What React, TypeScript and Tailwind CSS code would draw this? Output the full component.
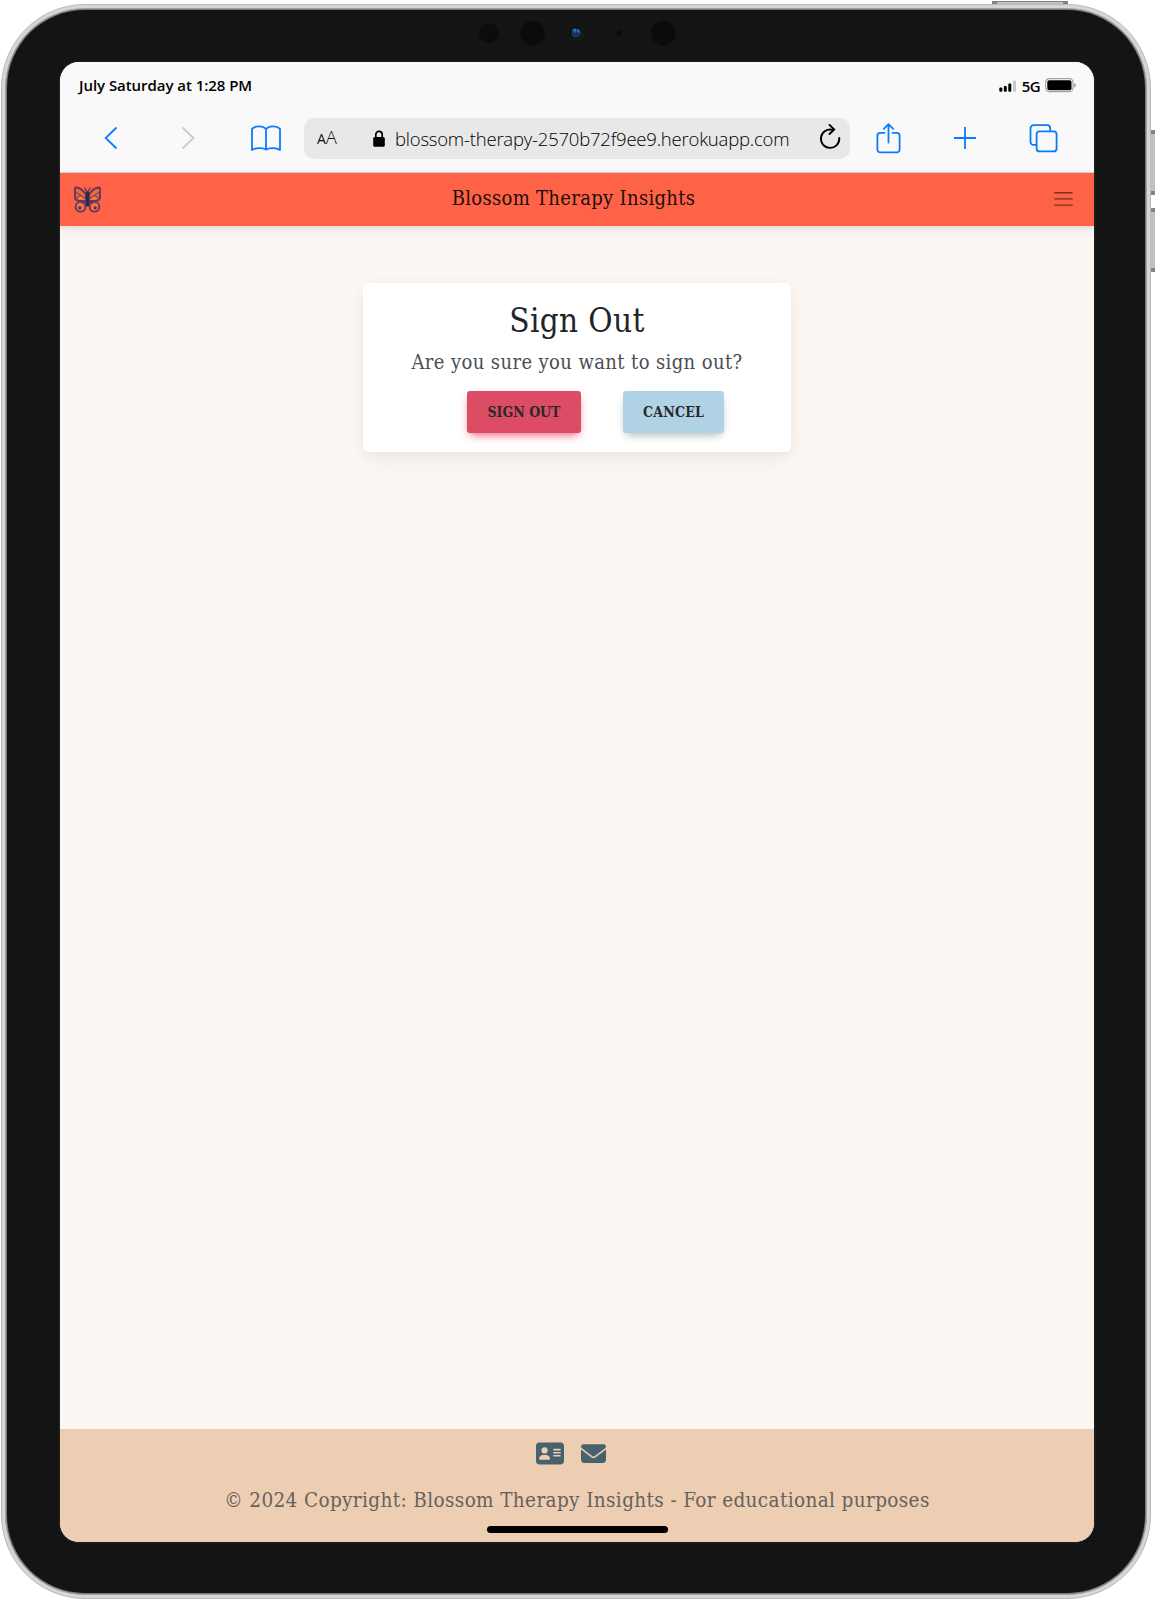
import type { ReactNode } from "react";
import { FaAddressCard, FaEnvelope } from "react-icons/fa6";

function Camera() {
  return (
    <div className="pointer-events-none absolute left-[476px] top-[15px]">
      <svg width="200" height="26" viewBox="0 0 200 26">
        <circle cx="10.7" cy="13" r="9.8" fill="#0b0d0c" />
        <circle cx="54.7" cy="13" r="12.2" fill="#090c0b" />
        <circle cx="99.5" cy="14.5" r="6.2" fill="#1e1e1c" />
        <circle cx="98" cy="13" r="6" fill="#0b0c0e" />
        <circle cx="98" cy="13" r="4.8" fill="#15355f" />
        <path d="M98 13 L94 10 A5 5 0 0 1 98 8.5 Z M99 9 A5 5 0 0 1 102.6 13 L99 12 Z" fill="#2d6cab" />
        <circle cx="141.3" cy="13" r="2.6" fill="#080a09" />
        <circle cx="185.5" cy="13" r="12.4" fill="#090c0b" />
      </svg>
    </div>
  );
}

function StatusBar() {
  return (
    <div className="flex h-[41px] items-start justify-between pl-[19px] pr-[18px] pt-[11px] font-['Open_Sans','Noto_Sans',sans-serif] text-[15px] font-semibold leading-[24px] text-black">
      <span className="tracking-[-0.05px]">July Saturday at 1:28 PM</span>
      <div className="flex items-center">
        <svg width="18" height="12" viewBox="0 0 18 12" className="mr-[5px]">
          <rect x="0.3" y="7.5" width="3" height="4.2" rx="1" fill="#000" />
          <rect x="4.8" y="6" width="3" height="5.7" rx="1" fill="#000" />
          <rect x="9.3" y="3.6" width="3" height="8.1" rx="1" fill="#000" />
          <rect x="14" y="0.5" width="3" height="11.2" rx="1" fill="#c9c9c9" />
        </svg>
        <span className="mr-[5px] pt-[1px] tracking-[-0.6px]">5G</span>
        <svg width="31" height="15" viewBox="0 0 31 15">
          <rect x="0.7" y="0.7" width="27.3" height="13" rx="3.6" fill="#fff" stroke="#a3a3a3" strokeWidth="1.2" />
          <rect x="2.3" y="2.3" width="24.2" height="9.9" rx="1.8" fill="#000" />
          <path d="M29.4 5.2v4c.8-.3 1.2-1.1 1.2-2s-.4-1.7-1.2-2z" fill="#777" />
        </svg>
      </div>
    </div>
  );
}

function Stroke({ w, h, className, children }: { w: number; h: number; className: string; children: ReactNode }) {
  return (
    <svg
      width={w}
      height={h}
      viewBox={`0 0 ${w} ${h}`}
      fill="none"
      stroke="currentColor"
      strokeLinecap="round"
      strokeLinejoin="round"
      strokeWidth="1.8"
      className={className}
    >
      {children}
    </svg>
  );
}

function BrowserBar() {
  return (
    <div className="flex h-[70px] items-center border-b border-[#d3d3d3] pl-[41px] text-[#0a7aff]">
      <Stroke w={20} h={30} className="shrink-0">
        <path d="M15.5 4.5 4.7 15l10.8 10.5" strokeLinecap="butt" strokeLinejoin="miter" />
      </Stroke>
      <Stroke w={20} h={30} className="ml-[57px] shrink-0 text-[#cbcbcb]">
        <path d="M4.5 4.5 15.5 15 4.5 25.5" strokeLinecap="butt" strokeLinejoin="miter" />
      </Stroke>
      <Stroke w={32} h={30} className="ml-[52px] shrink-0">
        <path d="M16 6.300C13.500 2.700 5.500 2.400 2 5.800V27c3.500-2.500 11-2.500 14-.500 3-2 10.500-2 14 .500V5.800C26.500 2.400 18.500 2.700 16 6.300V26.500" />
      </Stroke>
      <div className="ml-[22px] mt-[1px] flex h-[41px] w-[546px] shrink-0 items-center rounded-[10px] bg-[#e8e8e8] font-['Open_Sans','Noto_Sans',sans-serif] text-[#111]">
        <span className="ml-[13px] w-[56px] leading-[30px]">
          <span className="text-[14px]">A</span>
          <span className="text-[18.500px] font-light">A</span>
        </span>
        <svg width="12" height="17" viewBox="0 0 12 17" className="shrink-0">
          <path d="M2.800 7.500V4.500a3.200 3.200 0 0 1 6.400 0v3" fill="none" stroke="#000" strokeWidth="1.7" />
          <rect x="0.2" y="7" width="11.6" height="9.8" rx="1.6" fill="#000" />
        </svg>
        <span className="ml-[10px] w-[423px] whitespace-nowrap pt-[1px] text-[18.500px] font-light tracking-[-0.21px] leading-[30px] text-black">
          blossom-therapy-2570b72f9ee9.herokuapp.com
        </span>
        <svg width="24" height="28" viewBox="0 0 24 28" fill="none" stroke="#000" strokeWidth="1.9" className="mb-[5px] shrink-0" strokeLinecap="round">
          <path d="M14.500 7.800A9.200 9.200 0 1 0 21.300 16" />
          <path d="M11.500 2.900 16.200 7.500 11.500 12" strokeLinejoin="miter" />
        </svg>
      </div>
      <Stroke w={25} h={32} className="ml-[26px] shrink-0">
        <path d="M8.500 10.800H4.200a2.800 2.800 0 0 0-2.800 2.800v14a2.800 2.800 0 0 0 2.800 2.800h16.600a2.800 2.800 0 0 0 2.800-2.800v-14a2.800 2.800 0 0 0-2.800-2.800h-4.300" />
        <path d="M12.500 20.500V2.500M7.800 6.800l4.700-4.700 4.700 4.700" />
      </Stroke>
      <Stroke w={24} h={30} className="ml-[52px] shrink-0">
        <path d="M12 4v22M1 15h22" strokeLinecap="butt" />
      </Stroke>
      <Stroke w={29} h={30} className="ml-[52px] shrink-0">
        <path d="M7.500 21.900H4.500a3 3 0 0 1-3-3V5.200a3 3 0 0 1 3-3h13.700a3 3 0 0 1 3 3v3" />
        <rect x="7.6" y="8.4" width="20" height="20" rx="3" />
      </Stroke>
    </div>
  );
}

function Wing() {
  return (
    <>
      <path d="M12 8.500C9 4 5.500 1.700 2 1.500 1 1.500 1 2.200 1 3v8.500c0 1.800 1.500 3 4 3.200L12 15z" fill="#f0693a" strokeWidth="1.8" />
      <path d="M4 13 5.500 9.800 10 13.500z" fill="#f88a24" stroke="none" />
      <path d="M1.500 6l10 6.500M2 12l5-2.500" fill="none" strokeWidth="1" />
      <circle cx="6.5" cy="20.8" r="4.9" fill="#f47336" strokeWidth="1.8" />
      <circle cx="5.800" cy="21.8" r="1.6" fill="#4f3267" stroke="none" />
      <path d="M12 16.500 8 16.800" fill="none" strokeWidth="1.4" />
    </>
  );
}

function Butterfly() {
  return (
    <svg width="27" height="27" viewBox="0 0 27 27" stroke="#5a3769" strokeLinejoin="round">
      <Wing />
      <g transform="matrix(-1 0 0 1 27 0)">
        <Wing />
      </g>
      <path d="M12.800 5.500 10.600 1.300M14.200 5.500l2.200-4.200" fill="none" stroke="#3b2434" strokeWidth="1" />
      <rect x="11.900" y="5" width="3.200" height="15.500" rx="1.500" fill="#33234f" stroke="none" />
    </svg>
  );
}

function NavBar() {
  return (
    <nav className="flex h-[53px] items-center justify-between bg-[#ff6347] pl-[14px] pr-[21px] shadow-[0_4px_12px_0_rgba(0,0,0,0.07),0_2px_4px_rgba(0,0,0,0.05)]">
      <Butterfly />
      <span className="mb-[4px] mr-[8px] text-[20px] leading-[30px] tracking-[0.32px] text-[#1d0d0a]">Blossom Therapy Insights</span>
      <svg width="19" height="16" viewBox="0 0 19 16" stroke="#7a2e22" strokeWidth="1.4" strokeLinecap="round" className="mb-[2px]">
        <path d="M.8 1.700h17.400M.8 7.900h17.400M.8 14.100h17.400" />
      </svg>
    </nav>
  );
}

function SignOutCard() {
  return (
    <section className="mx-auto mt-[57px] h-[169px] w-[428px] rounded-[6px] bg-white pt-[18px] text-center shadow-[0_2px_15px_-3px_rgba(0,0,0,0.07),0_10px_24px_-2px_rgba(0,0,0,0.05)]">
      <h1 className="text-[33px] leading-[40px] tracking-[0.35px] text-[#212529]">Sign Out</h1>
      <p className="mt-[6px] text-[20px] leading-[30px] tracking-[0.390px] text-[#4a4d51]">Are you sure you want to sign out?</p>
      <div className="mt-[14px] flex gap-[42px] pl-[104px] text-[14px] font-semibold leading-[22px] text-[#2a2829]">
        <button className="h-[42px] w-[114px] rounded-[3px] bg-[#dc4c64] shadow-[0_4px_9px_-4px_#dc4c64,0_5px_10px_-2px_rgba(255,90,120,0.3)]">SIGN OUT</button>
        <button className="h-[42px] w-[101px] rounded-[3px] bg-[#b0d2e5] tracking-[0.200px] shadow-[0_4px_9px_-4px_rgba(0,0,0,0.25),0_5px_10px_-2px_rgba(0,0,0,0.12)]">CANCEL</button>
      </div>
    </section>
  );
}

function Footer() {
  return (
    <footer className="flex h-[113px] flex-col items-center bg-[#edceb2] pt-[11px]">
      <div className="mr-[12px] flex h-[26px] items-center gap-[17px] text-[#46626d]">
        <FaAddressCard className="h-[25px] w-[28px]" />
        <FaEnvelope className="h-[25px] w-[25px]" />
      </div>
      <p className="mt-[19px] whitespace-nowrap text-[20.500px] leading-[30px] tracking-[0.370px] text-[#66615d]">
        © 2024 Copyright: Blossom Therapy Insights - For educational purposes
      </p>
      <div className="ml-[1px] mt-[11px] h-[7px] w-[181px] shrink-0 rounded-full bg-black" />
    </footer>
  );
}

export default function App() {
  return (
    <div className="relative h-[1600px] w-[1155px] overflow-hidden bg-white pl-[1px] pt-[4px] font-['DejaVu_Serif_Condensed','DejaVu_Serif',serif]">
      <div className="absolute left-[992px] top-[1px] h-[3px] w-[76px] border-x-[5px] border-t border-[#7f8481] bg-[#bfc3c0]" />
      <div className="absolute left-[1151px] top-[130px] h-[65px] w-[4px] border-y-[4px] border-[#7f8481] bg-[#bfc3c0]" />
      <div className="absolute left-[1151px] top-[208px] h-[64px] w-[4px] border-y-[4px] border-[#7f8481] bg-[#bfc3c0]" />
      <div className="relative h-[1595px] w-[1150px] rounded-[84px] border border-[#b9babb] bg-[#d6d6d9] p-[3px]">
        <div className="h-full w-full rounded-[80px] border border-[#a2a3a5] bg-[#77787a] p-[1px]">
          <div className="h-full w-full rounded-[78px] bg-[#141414] pl-[53px] pt-[52px]">
            <div className="flex h-[1480px] w-[1034px] flex-col overflow-hidden rounded-[19px] bg-[#fcf7f3] shadow-[0_0_0_1.500px_#1b1f1e]">
              <header className="bg-[#f9f9f9]">
                <StatusBar />
                <BrowserBar />
              </header>
              <NavBar />
              <main className="flex-1">
                <SignOutCard />
              </main>
              <Footer />
            </div>
          </div>
        </div>
        <Camera />
      </div>
    </div>
  );
}
